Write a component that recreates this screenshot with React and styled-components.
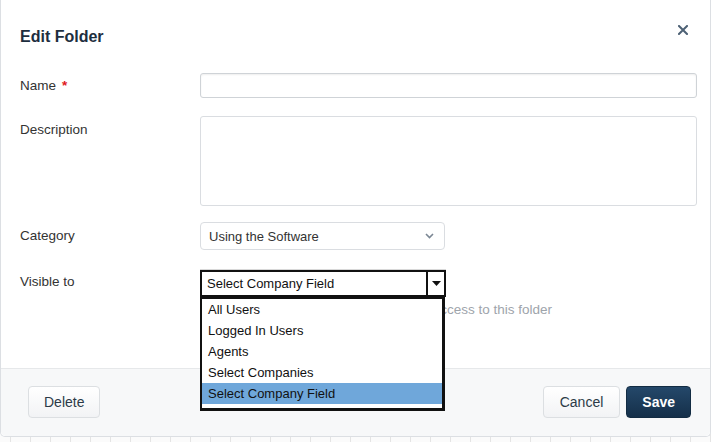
import React from "react";
import styled, { createGlobalStyle } from "styled-components";

const Global = createGlobalStyle`
  html, body { margin: 0; padding: 0; }
  body {
    font-family: "Liberation Sans", Arial, sans-serif;
    background-color: #fbfbfb;
    background-image:
      repeating-linear-gradient(90deg, transparent 0 10px, #e4e4e4 10px 11px, transparent 11px 20px),
      repeating-linear-gradient(0deg, transparent 0 19px, #ececec 19px 20px);
    width: 711px;
    height: 442px;
    overflow: hidden;
  }
`;

const Modal = styled.div`
  width: 709px;
  height: 436px;
  background: #fff;
  border: 1px solid #dcdfe3;
  border-top: none;
  border-radius: 0 0 5px 5px;
  display: flex;
  flex-direction: column;
  position: relative;
`;

const Header = styled.div`
  display: flex;
  align-items: flex-start;
  justify-content: space-between;
  padding: 28px 19px 0 19px;
  height: 45px;
`;

const Title = styled.h2`
  margin: 0;
  font-size: 16px;
  line-height: 18px;
  font-weight: 700;
  color: #1d2e3e;
`;

const Close = styled.button`
  border: none;
  background: none;
  padding: 0;
  margin: -5px 1px 0 0;
  width: 14px;
  height: 14px;
  display: flex;
  align-items: center;
  justify-content: center;
  cursor: pointer;
`;

const Body = styled.div`
  flex: 1;
  display: flex;
  flex-direction: column;
  padding: 0 0 0 19px;
`;

const Row = styled.div`
  display: grid;
  grid-template-columns: 180px 497px;
  align-items: start;
  margin-top: ${(p) => p.$mt || 0}px;
`;

const Label = styled.label`
  font-size: 13.5px;
  line-height: 16px;
  color: #333;
  padding-top: ${(p) => p.$pt ?? 5}px;
`;

const Star = styled.span`
  color: #e0181e;
  font-weight: 700;
  margin-left: 6px;
`;

const Input = styled.input`
  box-sizing: border-box;
  width: 497px;
  height: 25px;
  border: 1px solid #cfd3d7;
  border-radius: 3px;
  box-shadow: inset 0 1px 2px rgba(0, 0, 0, 0.07);
  outline: none;
  display: block;
`;

const TextArea = styled.textarea`
  box-sizing: border-box;
  width: 497px;
  height: 90px;
  border: 1px solid #dadde1;
  border-radius: 3px;
  resize: none;
  outline: none;
  display: block;
`;

const Select = styled.div`
  box-sizing: border-box;
  width: 245px;
  height: 28px;
  border: 1px solid #dadde1;
  border-radius: 4px;
  display: flex;
  align-items: center;
  justify-content: space-between;
  padding: 0 10px 0 8px;
  font-size: 13px;
  color: #333;
`;

const Field = styled.div`
  position: relative;
`;

const NativeSelect = styled.div`
  box-sizing: border-box;
  width: 246px;
  height: 27px;
  border: 2px solid #111;
  box-shadow: 0 -1px 0 #d8d8d8;
  display: flex;
  align-items: center;
  background: #fff;
  font-size: 13px;
  color: #111;
`;

const NativeText = styled.span`
  flex: 1;
  padding-left: 5px;
`;

const ArrowBox = styled.span`
  width: 16px;
  height: 100%;
  border-left: 2px solid #111;
  display: flex;
  align-items: center;
  justify-content: center;
`;

const Hint = styled.div`
  margin-top: 5px;
  font-size: 13.5px;
  color: #9ea4ab;
  white-space: nowrap;
`;

const List = styled.ul`
  position: absolute;
  left: 0;
  top: 27px;
  box-sizing: border-box;
  width: 245px;
  margin: 0;
  padding: 0 0 4px 0;
  list-style: none;
  background: #fff;
  border: 2px solid #111;
  border-bottom-width: 3px;
  border-right-width: 3px;
  z-index: 5;
`;

const Option = styled.li`
  height: 21px;
  line-height: 21px;
  padding-left: 6px;
  font-size: 13px;
  color: #111;
  background: ${(p) => (p.$active ? "#6fa7da" : "transparent")};
`;

const Footer = styled.div`
  height: 68px;
  border-top: 1px solid #e6e8ea;
  background: #f7f8f9;
  border-radius: 0 0 5px 5px;
  display: flex;
  align-items: flex-start;
  padding: 17px 19px 0 27px;
  box-sizing: border-box;
  gap: 6px;
`;

const Button = styled.button`
  height: 32px;
  padding: 0 ${(p) => p.$px || 15}px;
  border-radius: 4px;
  font-family: "Liberation Sans", Arial, sans-serif;
  font-size: 14px;
  cursor: pointer;
  margin-left: ${(p) => (p.$push ? "auto" : "0")};
  border: 1px solid ${(p) => (p.$primary ? "#132c43" : "#dcdfe2")};
  color: ${(p) => (p.$primary ? "#fff" : "#2c3a47")};
  font-weight: ${(p) => (p.$primary ? 700 : 400)};
  background: ${(p) =>
    p.$primary
      ? "linear-gradient(#24486a, #15304a)"
      : "linear-gradient(#ffffff, #f2f3f5)"};
`;

const options = [
  "All Users",
  "Logged In Users",
  "Agents",
  "Select Companies",
  "Select Company Field",
];

export default function App() {
  return (
    <>
      <Global />
      <Modal>
        <Header>
          <Title>Edit Folder</Title>
          <Close aria-label="Close">
            <svg width="10" height="10" viewBox="0 0 10 10">
              <path d="M1 1 L9 9 M9 1 L1 9" stroke="#4d6175" strokeWidth="2" strokeLinecap="square" />
            </svg>
          </Close>
        </Header>
        <Body>
          <Row>
            <Label $pt={5}>
              Name<Star>*</Star>
            </Label>
            <Input />
          </Row>
          <Row $mt={18}>
            <Label $pt={6}>Description</Label>
            <TextArea />
          </Row>
          <Row $mt={16}>
            <Label $pt={6}>Category</Label>
            <Select>
              <span>Using the Software</span>
              <svg width="9" height="6" viewBox="0 0 9 6">
                <path d="M1 1 L4.5 4.5 L8 1" stroke="#7b8794" strokeWidth="1.6" fill="none" />
              </svg>
            </Select>
          </Row>
          <Row $mt={20}>
            <Label $pt={4}>Visible to</Label>
            <Field>
              <NativeSelect>
                <NativeText>Select Company Field</NativeText>
                <ArrowBox>
                  <svg width="9" height="5" viewBox="0 0 9 5">
                    <path d="M0 0 L9 0 L4.5 5 Z" fill="#111" />
                  </svg>
                </ArrowBox>
              </NativeSelect>
              <Hint>Users in the chosen company field get access to this folder</Hint>
              <List>
                {options.map((o) => (
                  <Option key={o} $active={o === "Select Company Field"}>
                    {o}
                  </Option>
                ))}
              </List>
            </Field>
          </Row>
        </Body>
        <Footer>
          <Button $px={15}>Delete</Button>
          <Button $push $px={16}>Cancel</Button>
          <Button $primary $px={15}>Save</Button>
        </Footer>
      </Modal>
    </>
  );
}
